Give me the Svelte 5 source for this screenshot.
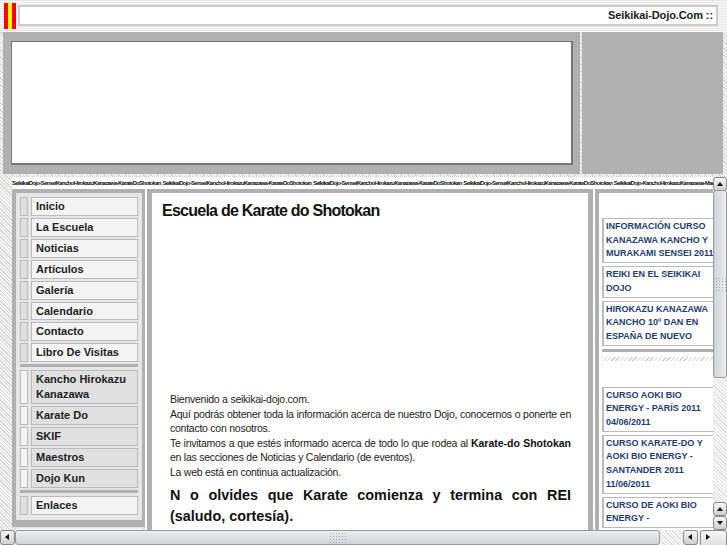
<script>
  const menuA = ['Inicio', 'La Escuela', 'Noticias', 'Artículos', 'Galería', 'Calendario', 'Contacto', 'Libro De Visitas'];
  const menuB = ['Kancho Hirokazu Kanazawa', 'Karate Do', 'SKIF', 'Maestros', 'Dojo Kun'];
  const news = [
    'INFORMACIÓN CURSO KANAZAWA KANCHO Y MURAKAMI SENSEI 2011',
    'REIKI EN EL SEIKIKAI DOJO',
    'HIROKAZU KANAZAWA KANCHO 10º DAN EN ESPAÑA DE NUEVO'
  ];
  const courses = [
    ['CURSO AOKI BIO ENERGY - PARÍS 2011', '04/06/2011'],
    ['CURSO KARATE-DO Y AOKI BIO ENERGY - SANTANDER 2011', '11/06/2011'],
    ['CURSO DE AOKI BIO ENERGY -', '']
  ];
  const strip = 'SeikikaiDojo-SenseiKanchoHirokazuKanazawa-KarateDoShotokan ';
</script>

<div class="page">
  <header class="top">
    <div class="flag"></div>
    <div class="title-box">Seikikai-Dojo.Com ::</div>
  </header>

  <section class="banner">
    <div class="banner-left"><div class="banner-frame"></div></div>
    <div class="banner-right"></div>
  </section>

  <div class="lower">
    <div class="marquee">{strip}{strip}{strip}{strip}SeikikaiDojo-KanchoHirokazuKanazawa-Maestros</div>
    <div class="columns">
      <nav class="side">
        <div class="side-inner">
          {#each menuA as m}
            <div class="row"><span class="sw"></span><a class="item">{m}</a></div>
          {/each}
          <div class="rule"></div>
          {#each menuB as m}
            <div class="row alt"><span class="sw"></span><a class="item">{m}</a></div>
          {/each}
          <div class="rule last"></div>
          <div class="row"><span class="sw"></span><a class="item">Enlaces</a></div>
        </div>
        <div class="side-next"></div>
      </nav>

      <main class="main">
        <h1>Escuela de Karate do Shotokan</h1>
        <div class="copy">
          <p>Bienvenido a seikikai-dojo.com.</p>
          <p>Aquí podrás obtener toda la información acerca de nuestro Dojo, conocernos o ponerte en contacto con nosotros.</p>
          <p>Te invitamos a que estés informado acerca de todo lo que rodea al <b>Karate-do Shotokan</b> en las secciones de Noticias y Calendario (de eventos).</p>
          <p>La web está en continua actualización.</p>
          <h2>N o olvides que Karate comienza y termina con REI (saludo, cortesía).</h2>
        </div>
      </main>

      <aside class="right">
        {#each news as n}
          <div class="card">{n}</div>
        {/each}
        <div class="bar"></div>
        <div class="hatch"></div>
        <div class="courses">
          {#each courses as c}
            <div class="card">{c[0]}{#if c[1]}<br />{c[1]}{/if}</div>
          {/each}
        </div>
      </aside>
    </div>
  </div>

  <div class="vbar">
    <div class="btn up"><i class="tri"></i></div>
    <div class="thumb"><span class="grip"></span></div>
    <div class="btn up second"><i class="tri"></i></div>
    <div class="btn down"><i class="tri"></i></div>
  </div>
  <div class="hbar">
    <div class="btn hb left"><i class="tri"></i></div>
    <div class="hthumb"><span class="grip"></span></div>
    <div class="btn hb left"><i class="tri"></i></div>
    <div class="btn hb right"><i class="tri"></i></div>
  </div>
</div>

<style>
  :global(body) { margin: 0; background: #fff; }
  .page {
    position: relative;
    width: 727px;
    height: 545px;
    overflow: hidden;
    font-family: "Liberation Sans", Arial, sans-serif;
    background: repeating-linear-gradient(45deg, #d6d6d6 0 1px, #f6f6f6 1px 2.5px);
  }
  .top {
    height: 32px;
    box-sizing: border-box;
    padding: 3px 9px 3px 4px;
    display: flex;
    gap: 2px;
    background: repeating-linear-gradient(180deg, #e6e6e6 0 1px, #fbfbfb 1px 2px);
  }
  .flag {
    width: 12px;
    height: 26px;
    background: linear-gradient(90deg, #f00 0 4px, #ff0 4px 8px, #f00 8px 12px);
  }
  .title-box {
    flex: 1;
    height: 21px;
    margin-top: 2px;
    box-sizing: border-box;
    border: 2px solid #ccc;
    background: #fff;
    text-align: right;
    font-size: 11px;
    font-weight: bold;
    letter-spacing: -0.1px;
    line-height: 17px;
    padding-right: 3px;
    color: #222;
  }
  .banner {
    height: 142px;
    display: flex;
    gap: 2px;
    margin: 0 4px 0 3px;
  }
  .banner-left {
    flex: 0 0 577px;
    box-sizing: border-box;
    background: #b0b0b0;
    padding: 9px 7px 9px 8px;
  }
  .banner-frame {
    height: 100%;
    box-sizing: border-box;
    background: #fff;
    border: 1px solid #777;
    border-width: 1px 2px 2px 1px;
  }
  .banner-right { flex: 1; background: #b0b0b0; }
  .lower { margin-left: 12px; margin-top: 2px; background: #fff; height: 371px; overflow: hidden; }
  .marquee {
    height: 13px;
    font-size: 6px;
    font-weight: bold;
    letter-spacing: -0.7px;
    word-spacing: 0.7px;
    line-height: 13px;
    white-space: nowrap;
    overflow: hidden;
    color: #111;
    background: #fff;
    border-top: 1px dotted #ccc;
    box-sizing: border-box;
  }
  .columns { display: flex; height: 358px; }
  .side { flex: 0 0 133px; background: #e4e4e4; }
  .side-inner {
    width: 133px;
    height: 338px;
    box-sizing: border-box;
    background: #e6e6e6;
    border: solid #b0b0b0;
    border-width: 4px 3px 7px 4px;
    padding: 4px 4px 0 4px;
  }
  .side-next { height: 6px; margin: 1px 3px 0 4px; background: #f4f4f4; }
  .row { display: flex; gap: 3px; margin-bottom: 2px; }
  .sw {
    flex: 0 0 8px;
    box-sizing: border-box;
    background: #e0e0e0;
    border: 1px solid #bbb;
  }
  .item {
    flex: 0 0 107px;
    box-sizing: border-box;
    background: #f4f4f4;
    border: 1px solid #bbb;
    font-size: 11px;
    font-weight: bold;
    line-height: 14.9px;
    padding: 1px 4px;
    color: #222;
  }
  .alt .sw { background: #f4f4f4; }
  .alt .item { background: #e0e0e0; }
  .rule { height: 3px; background: #b0b0b0; margin: 1px 0 3px; }
  .rule.last { margin-top: 0; }
  .main {
    flex: 0 0 446px;
    box-sizing: border-box;
    margin-left: 2px;
    background: #fff;
    border: solid #b0b0b0;
    border-width: 4px 5px 0 5px;
    padding: 7px 17px 0 10px;
    color: #222;
  }
  h1 {
    margin: 0;
    font-size: 16px;
    line-height: 22px;
    letter-spacing: -0.75px;
    color: #111;
  }
  .copy { margin: 170px 0 0 8px; }
  .copy p {
    margin: 0;
    font-size: 10.5px;
    letter-spacing: -0.25px;
    line-height: 14.5px;
    text-align: justify;
  }
  .copy b { color: #111; letter-spacing: 0; }
  h2 {
    margin: 6px 0 0;
    font-size: 14.4px;
    line-height: 20.5px;
    text-align: justify;
    color: #111;
  }
  .right {
    flex: 1;
    min-width: 0;
    margin-left: 2px;
    padding: 25px 0 0 3px;
    background: #fff;
    border: solid #b0b0b0;
    border-width: 4px 0 0 4px;
  }
  .card {
    box-sizing: border-box;
    width: 112px;
    border: 1px solid #bbb;
    border-left: 2px solid #bbb;
    border-right: 0;
    padding: 1px 0 1px 2px;
    font-size: 9px;
    font-weight: bold;
    line-height: 13.7px;
    color: #233c72;
    margin-bottom: 3px;
    background: #fff;
  }
  .bar { height: 3px; background: #b0b0b0; margin-top: 3px; }
  .hatch {
    height: 4px;
    margin-top: 5px;
    background: repeating-linear-gradient(135deg, #d0d0d0 0 1px, #fff 1px 3px);
  }
  .courses { margin-top: 26px; }
  .vbar {
    position: absolute;
    left: 713px;
    top: 177px;
    width: 14px;
    height: 353px;
    background: repeating-linear-gradient(45deg, #e0e0e0 0 1px, #f8f8f8 1px 2.5px);
  }
  .btn {
    position: relative;
    box-sizing: border-box;
    width: 14px;
    height: 14px;
    border: 1px solid #8a8a8a;
    border-radius: 3px;
    background: linear-gradient(#f6f6f6, #cfcfcf);
  }
  .tri {
    position: absolute;
    width: 0;
    height: 0;
    left: 3px;
    border-left: 3px solid transparent;
    border-right: 3px solid transparent;
  }
  .up .tri { top: 4px; border-bottom: 4px solid #111; }
  .down .tri { top: 4px; border-top: 4px solid #111; }
  .thumb {
    position: absolute;
    top: 13px;
    left: 0;
    width: 14px;
    height: 188px;
    box-sizing: border-box;
    border: 1px solid #9a9a9a;
    border-radius: 3px;
    background: linear-gradient(90deg, #cfd4d8, #eceeef);
  }
  .second { position: absolute; top: 325px; }
  .down { position: absolute; top: 339px; }
  .grip {
    position: absolute;
    background-image: radial-gradient(#a8a8a8 0.6px, transparent 0.7px);
    background-size: 3px 3px;
  }
  .thumb .grip { left: 1px; top: 86px; width: 11px; height: 15px; }
  .hbar {
    position: absolute;
    left: 0;
    top: 530px;
    width: 727px;
    height: 15px;
    background: repeating-linear-gradient(45deg, #e0e0e0 0 1px, #f8f8f8 1px 2.5px);
    display: flex;
  }
  .hb { height: 15px; }
  .hb.left { width: 15px; }
  .hb.left .tri {
    left: 4px;
    top: 3px;
    border: 0;
    border-top: 3px solid transparent;
    border-bottom: 3px solid transparent;
    border-right: 4px solid #111;
  }
  .hb.right { width: 14px; }
  .hb.right .tri {
    left: 5px;
    top: 3px;
    border: 0;
    border-top: 3px solid transparent;
    border-bottom: 3px solid transparent;
    border-left: 4px solid #111;
  }
  .hthumb {
    position: relative;
    width: 645px;
    margin-right: 23px;
    box-sizing: border-box;
    border: 1px solid #9a9a9a;
    border-radius: 3px;
    background: linear-gradient(#eceeef, #cfd4d8);
  }
  .hthumb .grip { left: 313px; top: 1px; width: 18px; height: 11px; }
</style>
